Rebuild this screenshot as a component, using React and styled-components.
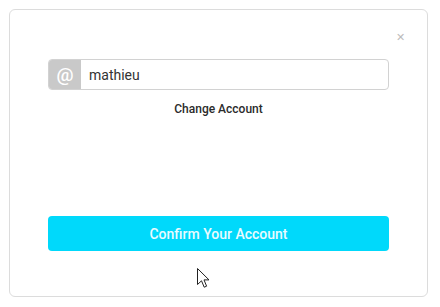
import React from 'react';
import styled, { createGlobalStyle } from 'styled-components';

const Global = createGlobalStyle`
  body {
    margin: 0;
    background: #fff;
    font-family: Roboto, "Liberation Sans", sans-serif;
  }
`

const Page = styled.div`
  position: relative;
  padding: 9px 12px 10px 9px;
`

const Card = styled.div`
  position: relative;
  box-sizing: border-box;
  width: 419px;
  height: 288px;
  border: 1px solid #dcdcdc;
  border-radius: 6px;
  padding: 49px 38px 0 38px;
  display: flex;
  flex-direction: column;
`

const Close = styled.span`
  position: absolute;
  top: 22px;
  right: 22px;
  color: #bcbcbc;
  font-size: 11px;
  line-height: 11px;
  font-weight: 300;
`

const InputGroup = styled.div`
  display: flex;
  height: 31px;
  border: 1px solid #d2d2d2;
  border-radius: 4px;
  overflow: hidden;
  box-sizing: border-box;
`

const Addon = styled.div`
  width: 32px;
  background: #c9c9c9;
  color: #fff;
  font-size: 19px;
  font-weight: 500;
  display: flex;
  align-items: center;
  justify-content: center;
`

const Field = styled.div`
  flex: 1;
  display: flex;
  align-items: center;
  padding-left: 8px;
  font-size: 14px;
  color: #333;
`

const LinkText = styled.div`
  margin-top: 12px;
  text-align: center;
  font-size: 12px;
  font-weight: 500;
  color: #2b2b2b;
`

const Button = styled.div`
  margin-top: 100px;
  height: 35px;
  border-radius: 4px;
  background: #00d9fb;
  color: #eafbff;
  font-size: 14px;
  font-weight: 500;
  display: flex;
  align-items: center;
  justify-content: center;
`

const Cursor = styled.svg`
  position: absolute;
  left: 197px;
  top: 268px;
`

export default function App() {
  return (
    <Page>
      <Global />
      <Card>
        <Close>✕</Close>
        <InputGroup>
          <Addon>@</Addon>
          <Field>mathieu</Field>
        </InputGroup>
        <LinkText>Change Account</LinkText>
        <Button>Confirm Your Account</Button>
      </Card>
      <Cursor width="13" height="21" viewBox="0 0 13 21">
        <path d="M0.5 0.5 L0.5 16.5 L4.5 12.8 L7.2 19.2 L9.6 18.2 L7 11.9 L12 11.9 Z" fill="#fff" stroke="#222" strokeWidth="1" />
      </Cursor>
    </Page>
  )
}
